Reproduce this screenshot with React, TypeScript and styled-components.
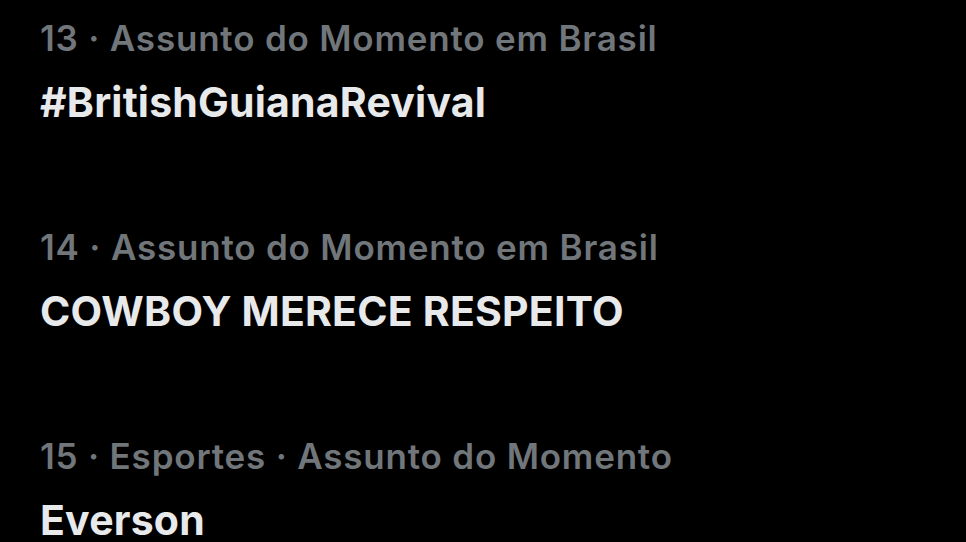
import React from "react";
import styled, { createGlobalStyle } from "styled-components";

type Trend = {
  rank: number;
  context: string[];
  name: string;
};

const trends: Trend[] = [
  { rank: 13, context: ["Assunto do Momento em Brasil"], name: "#BritishGuianaRevival" },
  { rank: 14, context: ["Assunto do Momento em Brasil"], name: "COWBOY MERECE RESPEITO" },
  { rank: 15, context: ["Esportes", "Assunto do Momento"], name: "Everson" },
];

const GlobalStyle = createGlobalStyle`
  html, body {
    margin: 0;
    padding: 0;
    background: #000;
    overflow: hidden;
  }
  body {
    font-family: Inter, "Noto Sans", "Liberation Sans", sans-serif;
    -webkit-font-smoothing: antialiased;
  }
`;

const TrendList = styled.div`
  display: flex;
  flex-direction: column;
  width: 966px;
  height: 542px;
  overflow: hidden;
  padding-top: 16px;
  box-sizing: border-box;
  background: #000;
`;

const TrendRow = styled.div`
  display: flex;
  flex-direction: column;
  gap: 20px;
  height: 209px;
  flex-shrink: 0;
  padding: 0 40px;
  box-sizing: border-box;
`;

const TrendMeta = styled.div`
  font-size: 35px;
  line-height: 44px;
  font-weight: 600;
  letter-spacing: 0.8px;
  color: #71767b;
  white-space: nowrap;
`;

const TrendName = styled.div`
  font-size: 41px;
  line-height: 44px;
  font-weight: 700;
  letter-spacing: 0.2px;
  color: #e7e9ea;
  white-space: nowrap;
`;

export default function App() {
  return (
    <>
      <GlobalStyle />
      <TrendList>
        {trends.map((t) => (
          <TrendRow key={t.rank}>
            <TrendMeta>{[String(t.rank), ...t.context].join(" · ")}</TrendMeta>
            <TrendName>{t.name}</TrendName>
          </TrendRow>
        ))}
      </TrendList>
    </>
  );
}
